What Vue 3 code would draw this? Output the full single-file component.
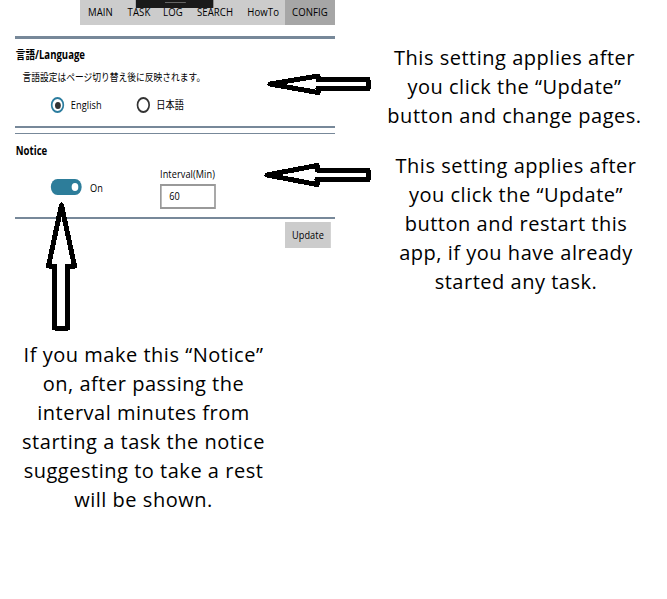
<script setup>
const tabs = [
  { label: 'MAIN', cls: 'main' },
  { label: 'TASK', cls: 'task' },
  { label: 'LOG', cls: 'log' },
  { label: 'SEARCH', cls: 'search' },
  { label: 'HowTo', cls: 'howto' },
  { label: 'CONFIG', cls: 'config' },
]
const languageNote = ['This setting applies after', 'you click the “Update”', 'button and change pages.']
const intervalNote = [
  'This setting applies after',
  'you click the “Update”',
  'button and restart this',
  'app, if you have already',
  'started any task.',
]
const noticeNote = [
  'If you make this “Notice”',
  'on, after passing the',
  'interval minutes from',
  'starting a task the notice',
  'suggesting to take a rest',
  'will be shown.',
]
</script>

<template>
  <div class="page">
    <div class="left">
      <section class="panel">
        <nav class="tabs">
          <span v-for="t in tabs" :key="t.label" class="tab" :class="t.cls">{{ t.label }}</span>
          <i class="grip"></i>
        </nav>
        <hr class="rule thick" />
        <div class="language">
          <h2>言語/Language</h2>
          <p>言語設定はページ切り替え後に反映されます。</p>
          <div class="radios">
            <label class="radio on"><i></i><span>English</span></label>
            <label class="radio"><i></i><span>日本語</span></label>
          </div>
        </div>
        <hr class="rule" />
        <hr class="rule thin" />
        <div class="notice">
          <h2>Notice</h2>
          <div class="fields">
            <div class="switch"><i></i><span>On</span></div>
            <div class="interval">
              <span class="caption">Interval(Min)</span>
              <div class="box">60</div>
            </div>
          </div>
        </div>
        <hr class="rule" />
        <button class="update">Update</button>
      </section>
      <div class="note"><div v-for="l in noticeNote" :key="l">{{ l }}</div></div>
    </div>
    <div class="right">
      <div class="note"><div v-for="l in languageNote" :key="l">{{ l }}</div></div>
      <div class="note second"><div v-for="l in intervalNote" :key="l">{{ l }}</div></div>
    </div>
    <svg class="arrows" width="667" height="599" viewBox="0 0 667 599">
      <path d="M270 84 L318 76 V79.500 H368 V88.500 H318 V92.500 Z" />
      <path d="M267 175 L317 165.500 V170 H368 V179.500 H317 V184.500 Z" />
      <path d="M61.500 205 L74.500 266 H67.500 V328 H54.500 V266 H48.500 Z" />
    </svg>
  </div>
</template>

<style>
body { background: #fff; }
</style>
<style scoped>
.page {
  position: relative;
  display: flex;
  width: 667px;
  height: 599px;
  overflow: hidden;
  background: #fff;
  color: #000;
  font-family: "Open Sans", "Noto Sans CJK JP", sans-serif;
}
.left { width: 360px; flex: none; }
.panel {
  width: 384px;
  height: 340px;
  margin-left: 15px;
  transform: scaleX(0.83333);
  transform-origin: 0 0;
  font-size: 11px;
  line-height: 16px;
  letter-spacing: 0.1px;
}
.tabs {
  position: relative;
  display: flex;
  height: 25px;
  margin-left: 78px;
  background: #ccc;
  font-size: 11.5px;
  line-height: 24px;
}
.tab { text-align: center; height: 25px; }
.main { width: 49px; }
.task { width: 43.5px; }
.log { width: 38px; }
.search { width: 63px; }
.howto { width: 52.5px; }
.config { width: 60px; background: #a6a6a6; flex: none; }
.grip {
  position: absolute;
  left: 67.2px;
  top: 0;
  width: 92.4px;
  height: 8px;
  background: linear-gradient(#666, #666) 34.8px 2px / 25.2px 1px no-repeat #1a1a1a;
}
.rule { height: 2px; margin: 0; border: 0; background: #778899; }
.thick { height: 3px; margin-top: 11px; }
.thin { height: 1px; margin-top: 5px; }
.language { height: 87px; padding-top: 8px; box-sizing: border-box; }
h2 { margin: 0 0 0 1px; font-size: 11.5px; line-height: 16px; font-weight: 700; letter-spacing: 0; }
p { margin: 6px 0 0 9px; font-size: 10.5px; line-height: 16px; white-space: nowrap; letter-spacing: 0; }
.radios { display: flex; margin: 12px 0 0 43px; }
.radio { display: flex; align-items: center; height: 16px; width: 102.5px; gap: 8px; }
.radio i {
  display: flex;
  box-sizing: border-box;
  width: 16px;
  height: 16px;
  border: 2px solid #333;
  border-radius: 50%;
}
.radio.on i { border-color: #2b7c9e; align-items: center; justify-content: center; }
.radio.on i::after { content: ""; width: 7px; height: 7px; border-radius: 50%; background: #333; }
.notice { height: 83px; padding-top: 9px; box-sizing: border-box; }
.fields { display: flex; padding: 7px 0 0 43px; }
.switch { display: flex; align-items: center; gap: 10px; width: 131px; height: 16px; margin-top: 13px; }
.switch span { position: relative; top: 1px; }
.switch i {
  display: flex;
  justify-content: flex-end;
  align-items: center;
  box-sizing: border-box;
  width: 37px;
  height: 16px;
  padding-right: 4px;
  border-radius: 8px;
  background: #2d7d9a;
}
.switch i::after { content: ""; width: 8px; height: 8px; border-radius: 50%; background: #fff; }
.caption { display: block; line-height: 16px; height: 18px; }
.box {
  box-sizing: border-box;
  width: 67px;
  height: 25px;
  padding-left: 9px;
  border: 2px solid #999;
  line-height: 20px;
}
.update {
  display: block;
  width: 55px;
  height: 26px;
  margin: 3px 5px 0 auto;
  padding: 0;
  border: 0;
  background: #ccc;
  color: #000;
  font: inherit;
  letter-spacing: inherit;
}
.left .note { width: 287px; }
.right { width: 309px; flex: none; display: flex; flex-direction: column; gap: 21px; padding-top: 43px; }
.note {
  font-size: 20px;
  line-height: 29px;
  letter-spacing: 0.52px;
  text-align: center;
  white-space: nowrap;
}
.second { padding-left: 3px; }
.arrows {
  position: absolute;
  left: 0;
  top: 0;
  fill: #fff;
  stroke: #000;
  stroke-width: 5;
  stroke-linejoin: round;
  shape-rendering: crispEdges;
}
</style>
